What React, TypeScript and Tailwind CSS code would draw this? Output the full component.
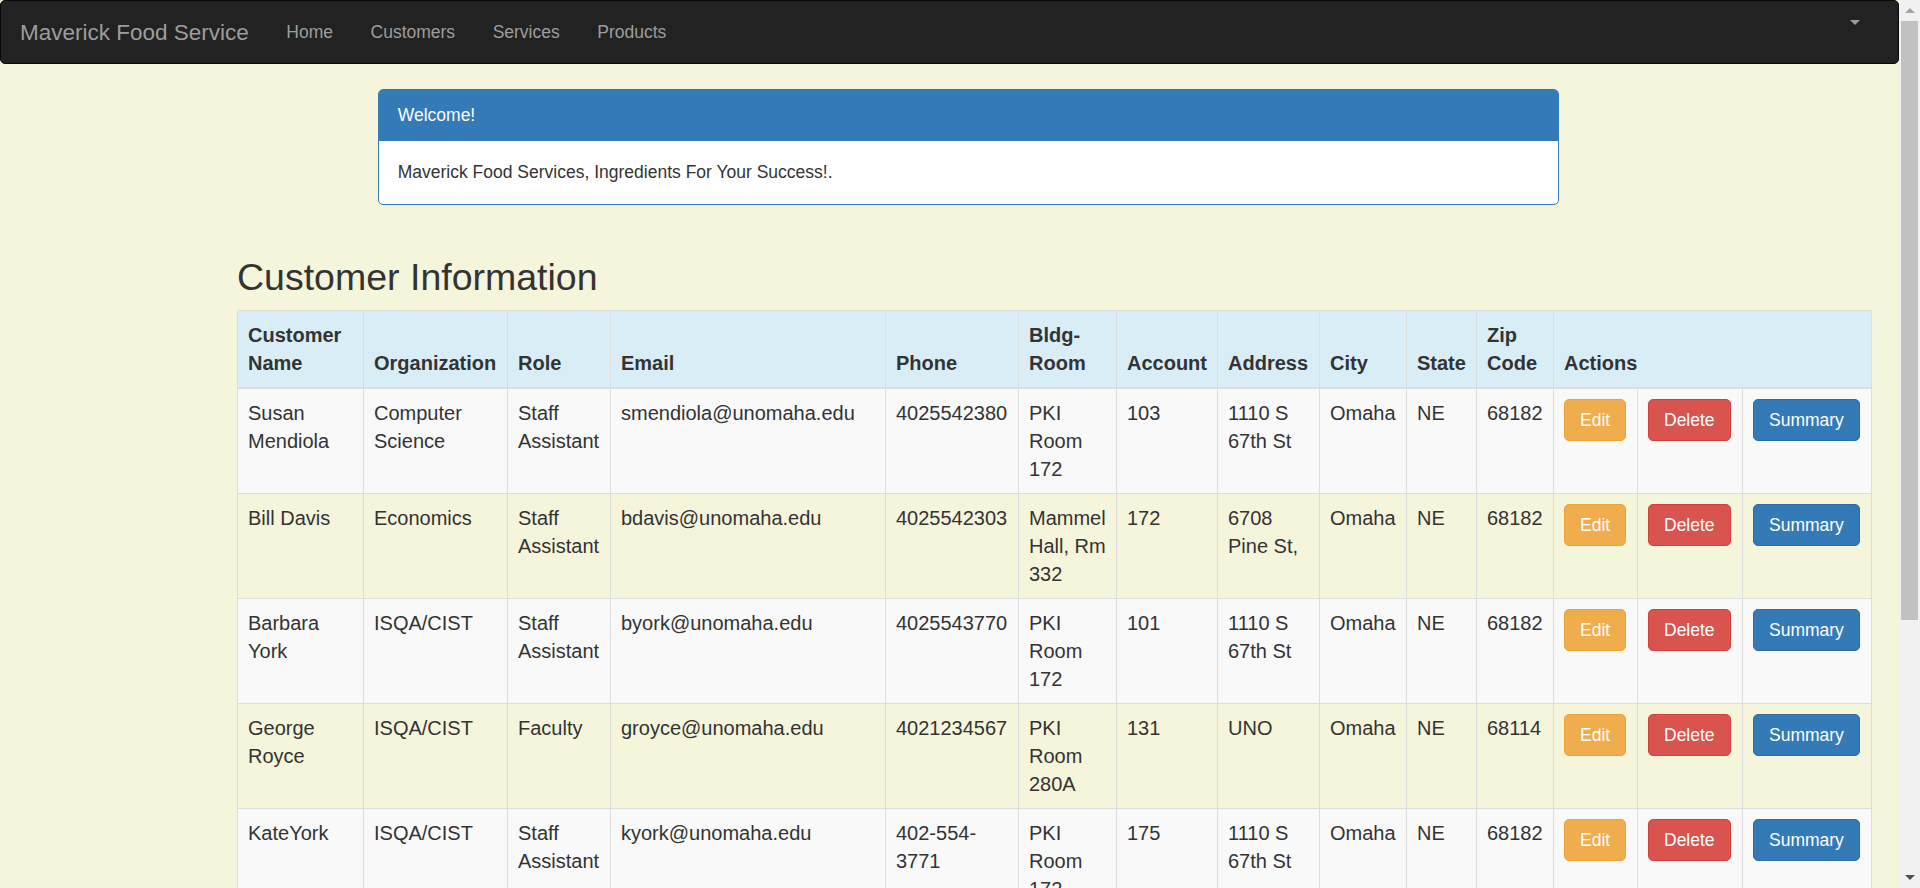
import React from "react";

type Row = {
  name: string;
  org: string;
  role: string;
  email: string;
  phone: string;
  bldg: string;
  acct: string;
  addr: string;
  city: string;
  state: string;
  zip: string;
};

const rows: Row[] = [
  { name: "Susan Mendiola", org: "Computer Science", role: "Staff Assistant", email: "smendiola@unomaha.edu", phone: "4025542380", bldg: "PKI Room 172", acct: "103", addr: "1110 S 67th St", city: "Omaha", state: "NE", zip: "68182" },
  { name: "Bill Davis", org: "Economics", role: "Staff Assistant", email: "bdavis@unomaha.edu", phone: "4025542303", bldg: "Mammel Hall, Rm 332", acct: "172", addr: "6708 Pine St,", city: "Omaha", state: "NE", zip: "68182" },
  { name: "Barbara York", org: "ISQA/CIST", role: "Staff Assistant", email: "byork@unomaha.edu", phone: "4025543770", bldg: "PKI Room 172", acct: "101", addr: "1110 S 67th St", city: "Omaha", state: "NE", zip: "68182" },
  { name: "George Royce", org: "ISQA/CIST", role: "Faculty", email: "groyce@unomaha.edu", phone: "4021234567", bldg: "PKI Room 280A", acct: "131", addr: "UNO", city: "Omaha", state: "NE", zip: "68114" },
  { name: "KateYork", org: "ISQA/CIST", role: "Staff Assistant", email: "kyork@unomaha.edu", phone: "402-554-3771", bldg: "PKI Room 172", acct: "175", addr: "1110 S 67th St", city: "Omaha", state: "NE", zip: "68182" },
];

const th = "border border-[#ddd] border-b-2 px-[10px] py-[10px] text-left align-bottom font-bold";
const td = "border border-[#ddd] px-[10px] py-[10px] align-top";
const btn =
  "inline-block align-top rounded-[5px] border px-[15px] py-[7.5px] text-[17.5px] leading-[25px] text-white";

export default function App() {
  return (
    <div
      className="flex h-[888px] w-full overflow-hidden bg-[#f5f5dc] text-[#333]"
      style={{ fontFamily: '"Liberation Sans", Arial, Helvetica, sans-serif' }}
    >
      <div className="flex min-w-0 flex-1 flex-col">
        {/* Navbar */}
        <nav className="flex h-[64px] shrink-0 items-center rounded-[5px] border border-[#080808] bg-[#222] text-[#9d9d9d]">
          <span className="pl-[19px] pr-[18.75px] text-[22.5px] leading-[25px]">Maverick Food Service</span>
          <span className="px-[18.75px] text-[17.5px] leading-[25px]">Home</span>
          <span className="px-[18.75px] text-[17.5px] leading-[25px]">Customers</span>
          <span className="px-[18.75px] text-[17.5px] leading-[25px]">Services</span>
          <span className="px-[18.75px] text-[17.5px] leading-[25px]">Products</span>
          <span className="ml-auto mr-[38px] mt-[19px] h-0 w-0 self-start border-x-[5px] border-t-[5px] border-x-transparent border-t-[#9d9d9d]" />
        </nav>

        {/* Content */}
        <div className="shrink-0 pl-[237px]">
          <div className="ml-[141px] mt-[25px] w-[1181px] overflow-hidden rounded-[5px] border border-[#337ab7] bg-white text-[17.5px] leading-[25px]">
            <div className="border-b border-[#337ab7] bg-[#337ab7] px-[18.75px] py-[12.5px] text-white">Welcome!</div>
            <div className="px-[18.75px] py-[18.75px]">Maverick Food Services, Ingredients For Your Success!.</div>
          </div>

          <h2 className="mb-[12.5px] mt-[52px] text-[37.5px] font-normal leading-[41.25px]">Customer Information</h2>

          <table className="w-[1634px] table-fixed border-collapse text-[20px] leading-[28px]">
            <colgroup>
              <col className="w-[126px]" />
              <col className="w-[144px]" />
              <col className="w-[103px]" />
              <col className="w-[275px]" />
              <col className="w-[133px]" />
              <col className="w-[98px]" />
              <col className="w-[101px]" />
              <col className="w-[102px]" />
              <col className="w-[87px]" />
              <col className="w-[70px]" />
              <col className="w-[77px]" />
              <col className="w-[84px]" />
              <col className="w-[105px]" />
              <col className="w-[129px]" />
            </colgroup>
            <thead>
              <tr className="bg-[#d9edf7]">
                <th className={th}>Customer Name</th>
                <th className={th}>Organization</th>
                <th className={th}>Role</th>
                <th className={th}>Email</th>
                <th className={th}>Phone</th>
                <th className={th}>Bldg-Room</th>
                <th className={th}>Account</th>
                <th className={th}>Address</th>
                <th className={th}>City</th>
                <th className={th}>State</th>
                <th className={th}>Zip Code</th>
                <th className={th} colSpan={3}>Actions</th>
              </tr>
            </thead>
            <tbody>
              {rows.map((r, i) => (
                <tr key={i} className={i % 2 === 0 ? "bg-[#f9f9f9]" : ""}>
                  <td className={td}>{r.name}</td>
                  <td className={td}>{r.org}</td>
                  <td className={td}>{r.role}</td>
                  <td className={td}>{r.email}</td>
                  <td className={td}>{r.phone}</td>
                  <td className={td}>{r.bldg}</td>
                  <td className={td}>{r.acct}</td>
                  <td className={td}>{r.addr}</td>
                  <td className={td}>{r.city}</td>
                  <td className={td}>{r.state}</td>
                  <td className={td}>{r.zip}</td>
                  <td className={td}>
                    <span className={`${btn} border-[#eea236] bg-[#f0ad4e]`}>Edit</span>
                  </td>
                  <td className={td}>
                    <span className={`${btn} border-[#d43f3a] bg-[#d9534f]`}>Delete</span>
                  </td>
                  <td className={td}>
                    <span className={`${btn} border-[#2e6da4] bg-[#337ab7]`}>Summary</span>
                  </td>
                </tr>
              ))}
            </tbody>
          </table>
        </div>
      </div>

      {/* Scrollbar */}
      <div className="flex w-[21px] shrink-0 flex-col bg-[#f1f1f1]">
        <div className="flex h-[21px] shrink-0 items-center justify-center">
          <span className="h-0 w-0 border-x-[5px] border-b-[5px] border-x-transparent border-b-[#a3a3a3]" />
        </div>
        <div className="mx-[2px] h-[599px] shrink-0 bg-[#c1c1c1]" />
        <div className="flex-1" />
        <div className="flex h-[21px] shrink-0 items-center justify-center">
          <span className="h-0 w-0 border-x-[5px] border-t-[5px] border-x-transparent border-t-[#505050]" />
        </div>
      </div>
    </div>
  );
}
